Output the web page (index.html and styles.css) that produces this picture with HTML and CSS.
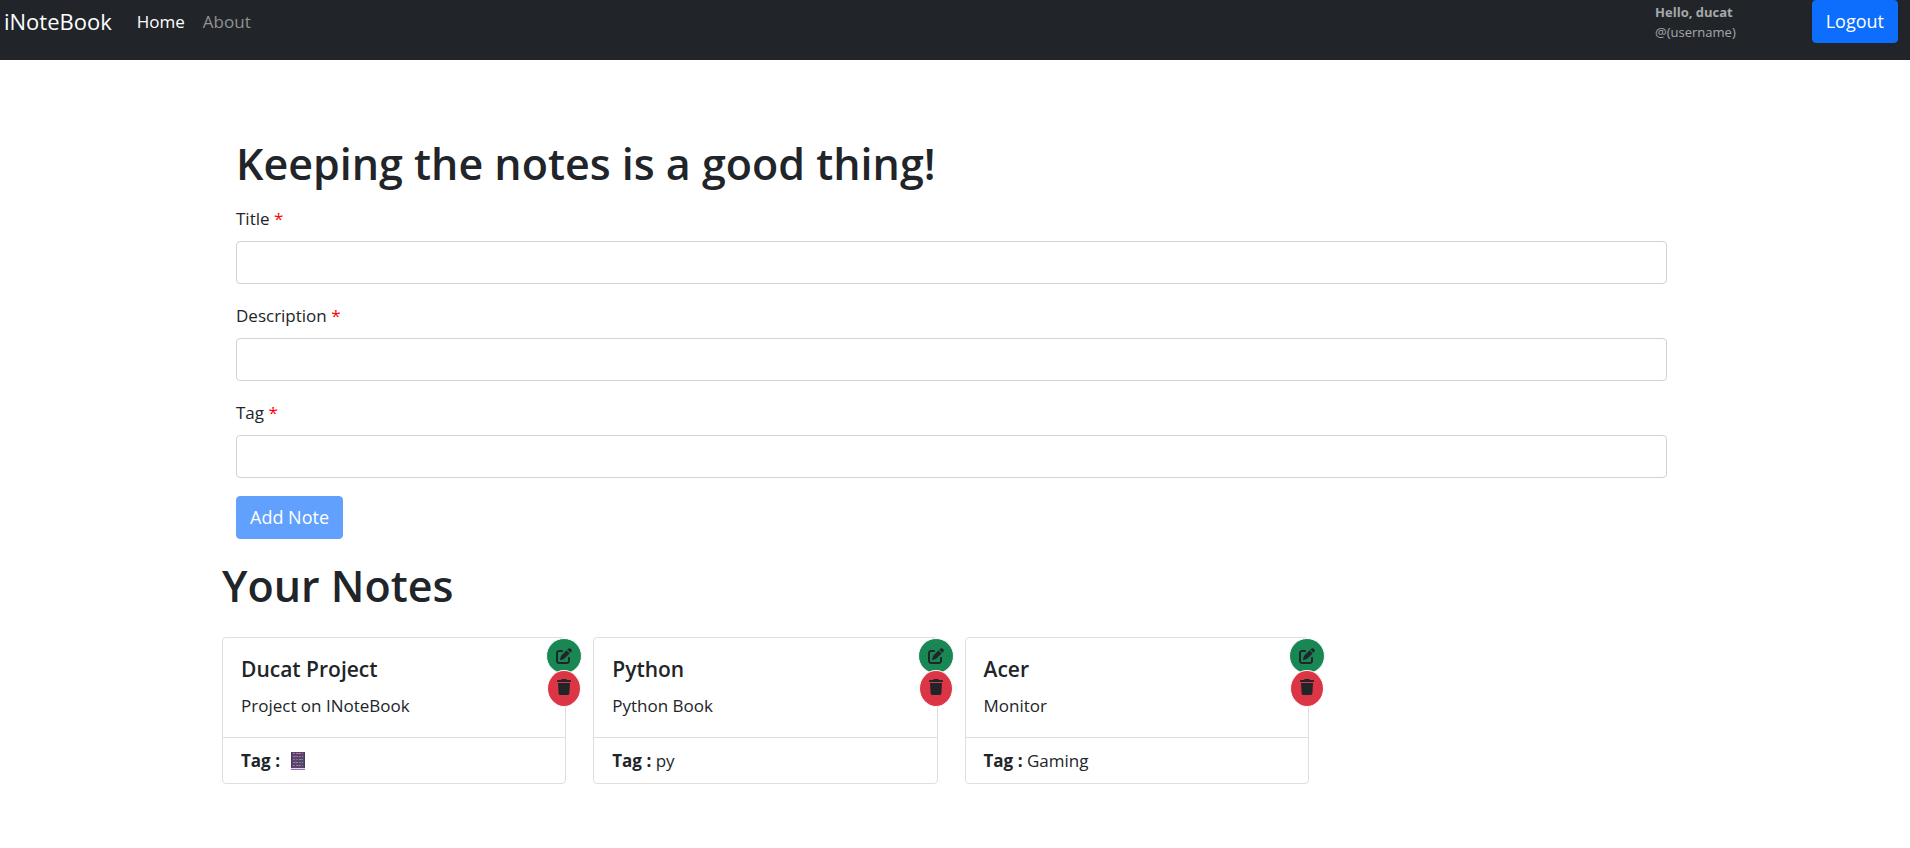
FILE: index.html
```html
<!DOCTYPE html>
<html lang="en">
<head>
<meta charset="utf-8">
<meta name="viewport" content="width=device-width, initial-scale=1">
<title>iNoteBook</title>
<link rel="stylesheet" href="styles.css">
</head>
<body>
<svg class="sprite" aria-hidden="true">
  <symbol id="icon-edit" viewBox="0 0 512 512"><path d="M471.6 21.7c-21.9-21.9-57.3-21.9-79.2 0L362.3 51.7l97.9 97.9 30.1-30.1c21.9-21.9 21.9-57.3 0-79.2L471.6 21.7zm-299.2 220c-6.1 6.1-10.8 13.6-13.5 21.9l-29.6 88.8c-2.9 8.6-.6 18.1 5.8 24.6s15.9 8.7 24.6 5.8l88.8-29.6c8.2-2.7 15.7-7.4 21.9-13.5L437.7 172.3 339.7 74.3 172.4 241.7zM96 64C43 64 0 107 0 160V416c0 53 43 96 96 96H352c53 0 96-43 96-96V320c0-17.700-14.300-32-32-32s-32 14.300-32 32v96c0 17.700-14.300 32-32 32H96c-17.700 0-32-14.300-32-32V160c0-17.700 14.300-32 32-32h96c17.700 0 32-14.300 32-32s-14.300-32-32-32H96z"/></symbol>
  <symbol id="icon-trash" viewBox="0 0 448 512"><path d="M135.200 17.700L128 32H32C14.300 32 0 46.300 0 64S14.300 96 32 96H416c17.700 0 32-14.300 32-32s-14.300-32-32-32H320l-7.200-14.300C307.400 6.800 296.300 0 284.200 0H163.800c-12.100 0-23.200 6.800-28.600 17.700zM416 128H32L53.200 467c1.600 25.300 22.600 45 47.900 45H346.900c25.300 0 46.300-19.700 47.900-45L416 128z"/></symbol>
</svg>

<header class="navbar">
  <a class="brand" href="#">iNoteBook</a>
  <nav class="nav-links">
    <a class="nav-link active" href="#">Home</a>
    <a class="nav-link" href="#">About</a>
  </nav>
  <p class="user"><strong>Hello, ducat</strong><br>@(username)</p>
  <button class="btn" type="button">Logout</button>
</header>

<main class="page">
  <div class="container">
    <form class="note-form">
      <h1 class="heading">Keeping the notes is a good thing!</h1>
      <div class="field">
        <label for="title">Title <span class="required">*</span></label>
        <input id="title" type="text">
      </div>
      <div class="field">
        <label for="description">Description <span class="required">*</span></label>
        <input id="description" type="text">
      </div>
      <div class="field">
        <label for="tag">Tag <span class="required">*</span></label>
        <input id="tag" type="text">
      </div>
      <button class="btn" type="submit" disabled>Add Note</button>
    </form>

    <h1 class="heading">Your Notes</h1>
    <div class="notes">
      <article class="card">
        <div class="card-body">
          <h2 class="card-title">Ducat Project</h2>
          <p class="card-text">Project on INoteBook</p>
        </div>
        <div class="card-footer"><strong>Tag :</strong>
          <svg class="tag-picture" viewBox="0 0 14 18" aria-hidden="true">
            <path fill="#5a4468" d="M0 0h14v18H0z"/>
            <path fill="#483a58" d="M0 0h1v16H0zM13 0h1v16h-1z"/>
            <path stroke="#98869f" stroke-dasharray="2 1" d="M2 1.500h10M2 4.500h10M2 7.500h10M2 10.500h10M2 13.500h10"/>
            <path stroke="#d04a9c" stroke-dasharray="1 3" d="M3 1.500h9M5 4.500h7M2 7.500h9M4 10.500h8M3 13.500h9"/>
            <path stroke="#3d82bd" stroke-dasharray="1 4" d="M4 4.500h8M5 7.500h7M3 10.500h9M6 13.500h6"/>
            <path fill="#e6d8f0" d="M0 16h14v1H0z"/><path fill="#9873b2" d="M0 17h14v1H0z"/>
          </svg>
        </div>
        <div class="actions">
          <button class="action edit" type="button" aria-label="Edit note"><svg><use href="#icon-edit"/></svg></button>
          <button class="action delete" type="button" aria-label="Delete note"><svg><use href="#icon-trash"/></svg></button>
        </div>
      </article>
      <article class="card">
        <div class="card-body">
          <h2 class="card-title">Python</h2>
          <p class="card-text">Python Book</p>
        </div>
        <div class="card-footer"><strong>Tag :</strong> py</div>
        <div class="actions">
          <button class="action edit" type="button" aria-label="Edit note"><svg><use href="#icon-edit"/></svg></button>
          <button class="action delete" type="button" aria-label="Delete note"><svg><use href="#icon-trash"/></svg></button>
        </div>
      </article>
      <article class="card">
        <div class="card-body">
          <h2 class="card-title">Acer</h2>
          <p class="card-text">Monitor</p>
        </div>
        <div class="card-footer"><strong>Tag :</strong> Gaming</div>
        <div class="actions">
          <button class="action edit" type="button" aria-label="Edit note"><svg><use href="#icon-edit"/></svg></button>
          <button class="action delete" type="button" aria-label="Delete note"><svg><use href="#icon-trash"/></svg></button>
        </div>
      </article>
    </div>
  </div>
</main>
</body>
</html>
```

FILE: styles.css
```css
* {
  box-sizing: border-box;
}

body {
  margin: 0;
  color: #212529;
  background: #fff;
  font: 17px/27px "Segoe UI", "Open Sans", "Noto Sans", sans-serif;
}

h1, h2, p {
  margin: 0;
}

.sprite {
  display: none;
}

.navbar {
  display: flex;
  align-items: flex-start;
  min-height: 60px;
  padding: 0 12px 0 4px;
  background: #212529;
}

.brand {
  padding: 5px 0;
  color: #fff;
  font-size: 22px;
  line-height: 32px;
  text-decoration: none;
}

.nav-links {
  display: flex;
  flex: 1;
  margin-left: 16px;
}

.nav-link {
  padding: 8px 9px;
  color: #909294;
  text-decoration: none;
}

.nav-link.active {
  color: #fff;
}

.user {
  margin-right: 76px;
  padding-top: 2px;
  color: #a6a8a9;
  font-size: 13px;
  line-height: 20px;
}

.btn {
  padding: 7px 13px;
  border: 1px solid #0d6efd;
  border-radius: 4px;
  color: #fff;
  background: #0d6efd;
  font: inherit;
  font-size: 18px;
}

.btn:disabled {
  opacity: 0.65;
}

.page {
  padding: 77px 7px 54px 0;
}

.container {
  max-width: 1485px;
  margin: 0 auto;
  padding: 0 14px 0 13px;
}

.note-form {
  padding: 0 13px 20px 14px;
}

.heading {
  margin-bottom: 14px;
  font-size: 43px;
  font-weight: 600;
  line-height: 54px;
}

.field {
  display: flex;
  flex-direction: column;
  gap: 9px;
  margin-bottom: 18px;
}

.required {
  color: #f00;
}

.field input {
  width: 100%;
  height: 43px;
  padding: 7px 13px;
  border: 1px solid #ced4da;
  border-radius: 4px;
  color: inherit;
  background: #fff;
  font: inherit;
}

.notes {
  display: grid;
  grid-template-columns: repeat(4, 1fr);
  gap: 27px;
  margin-top: 24px;
}

.card {
  position: relative;
  border: 1px solid #dfdfdf;
  border-radius: 4px;
}

.card-body {
  padding: 18px;
}

.card-title {
  margin-bottom: 9px;
  font-size: 21px;
  font-weight: 600;
  line-height: 27px;
}

.card-footer {
  padding: 9px 18px;
  border-top: 1px solid #dfdfdf;
}

.tag-picture {
  width: 14px;
  height: 18px;
  margin-left: 7px;
  vertical-align: -3px;
}

.actions {
  position: absolute;
  top: 0;
  right: -17px;
  display: flex;
  flex-direction: column;
  align-items: center;
}

.action {
  display: grid;
  place-items: center;
  width: 36px;
  height: 36px;
  padding: 0;
  border: 1px solid #fff;
  border-radius: 50%;
  color: #212529;
}

.action svg {
  width: 16px;
  height: 16px;
  fill: currentColor;
}

.edit {
  background: #198754;
}

.delete {
  width: 34px;
  height: 37px;
  margin-top: -4px;
  padding-bottom: 3px;
  background: #dc3545;
}
```
